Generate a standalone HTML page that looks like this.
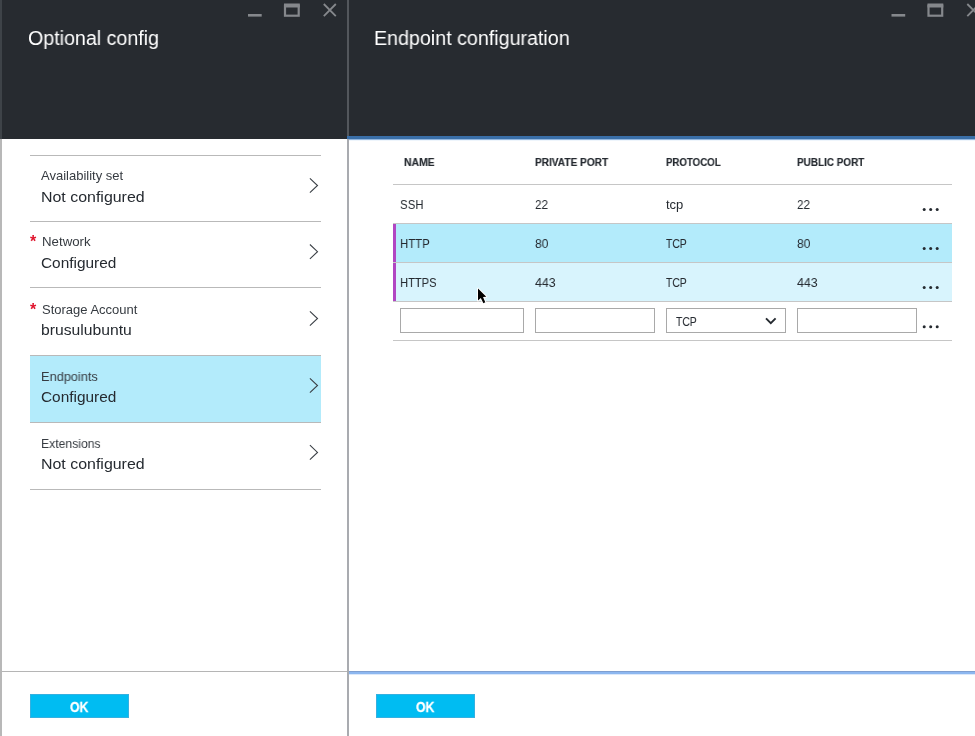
<!DOCTYPE html>
<html><head><meta charset="utf-8">
<style>
*{box-sizing:border-box;margin:0;padding:0}
html,body{width:975px;height:736px;overflow:hidden;background:#fff;font-family:"Liberation Sans",sans-serif;color:#252a30}
.abs{position:absolute}
.t{position:absolute;white-space:nowrap;line-height:1;transform-origin:0 0;will-change:transform}
.hdr{background:#272b30}
.title{font-size:20px;color:#fff}
.lbl{font-size:13px;color:#363b41}
.val{font-size:15px;color:#252a30}
.hl{background:#b3ebfb}
.line{position:absolute;height:1px;background:#b9b9b9}
.th{font-size:11px;font-weight:bold;color:#252a30;-webkit-text-stroke:0.15px #252a30}
.td{font-size:13px;color:#252a30}
.inp{position:absolute;border:1px solid #a9a9a9;background:#fff;height:25px}
.ok{position:absolute;background:#00bcf2;height:24.2px;width:98.7px;border:1px solid #35b0e0}
.okt{font-size:14px;font-weight:bold;color:#fff;-webkit-text-stroke:0.3px #fff}
.star{font-size:16px;font-weight:bold;color:#e0142d}
</style></head><body>
<!-- LEFT PANEL -->
<div class="abs hdr" style="left:0;top:0;width:348px;height:139px"></div>
<div class="abs" style="left:0;top:0;width:2px;height:139px;background:#3e4348"></div>
<div class="abs" style="left:0;top:139px;width:2px;height:597px;background:#b8b8b8"></div>
<div class="abs" style="left:347px;top:0;width:2px;height:139px;background:#53575c"></div>
<div class="abs" style="left:347px;top:139px;width:2px;height:597px;background:#a9abb0"></div>
<!-- RIGHT PANEL -->
<div class="abs hdr" style="left:349px;top:0;width:626px;height:136px"></div>
<div class="abs" style="left:347px;top:136px;width:628px;height:3px;background:#3a6fa8"></div>
<div class="abs" style="left:349px;top:139px;width:626px;height:1px;background:#94b7df"></div>
<div class="abs" style="left:349px;top:140px;width:626px;height:1px;background:#eef5fc"></div>

<div class="t title" id="t1" style="left:28px;top:28px;transform:scaleX(0.982)">Optional config</div>
<div class="t title" id="t2" style="left:374px;top:28px;transform:scaleX(0.983)">Endpoint configuration</div>

<!-- window icons -->
<svg class="abs" style="left:0;top:0" width="975" height="30" viewBox="0 0 975 30">
 <g fill="none" stroke="#85888c">
  <g id="wi">
   <rect x="248" y="14" width="13.7" height="2.6" fill="#85888c" stroke="none"/>
   <rect x="285" y="5.7" width="13.7" height="10" stroke-width="2.2"/>
   <rect x="284" y="3.5" width="15.8" height="4" fill="#85888c" stroke="none"/>
   <path d="M323.8 4 L335.8 16.2 M335.8 4 L323.8 16.2" stroke-width="1.8"/>
  </g>
  <use href="#wi" x="643.5"/>
 </g>
</svg>

<!-- left list -->
<div class="abs hl" style="left:30px;top:356px;width:291px;height:66px"></div>
<div class="line" style="left:30px;width:291px;top:155px"></div>
<div class="line" style="left:30px;width:291px;top:221px"></div>
<div class="line" style="left:30px;width:291px;top:287px"></div>
<div class="line" style="left:30px;width:291px;top:355px"></div>
<div class="line" style="left:30px;width:291px;top:422px"></div>
<div class="line" style="left:30px;width:291px;top:489px"></div>

<div class="t lbl" id="l1" style="left:41px;top:169px">Availability set</div>
<div class="t val" id="v1" style="left:41px;top:189px;transform:scaleX(1.0625)">Not configured</div>
<div class="t star" id="s1" style="left:30px;top:233.7px">*</div>
<div class="t lbl" id="l2" style="left:42px;top:235px;transform:scaleX(1.02)">Network</div>
<div class="t val" id="v2" style="left:41px;top:255px;transform:scaleX(1.027)">Configured</div>
<div class="t star" id="s2" style="left:30px;top:301.8px">*</div>
<div class="t lbl" id="l3" style="left:42px;top:302.8px">Storage Account</div>
<div class="t val" id="v3" style="left:41px;top:321.6px;transform:scaleX(1.047)">brusulubuntu</div>
<div class="t lbl" id="l4" style="left:41px;top:370px;transform:scaleX(0.983)">Endpoints</div>
<div class="t val" id="v4" style="left:41px;top:389px;transform:scaleX(1.027)">Configured</div>
<div class="t lbl" id="l5" style="left:41px;top:437px;transform:scaleX(0.9375)">Extensions</div>
<div class="t val" id="v5" style="left:41px;top:456px;transform:scaleX(1.0625)">Not configured</div>

<svg class="abs" style="left:300px;top:150px" width="30" height="330" viewBox="0 0 30 330">
 <g fill="none" stroke="#3b4046" stroke-width="1.1">
  <path id="chv" d="M9.9 28.3 L17.5 35.5 L9.9 42.7"/>
  <use href="#chv" y="66.2"/>
  <use href="#chv" y="133"/>
  <use href="#chv" y="200"/>
  <use href="#chv" y="266.9"/>
 </g>
</svg>

<!-- left footer -->
<div class="line" style="left:2px;width:345px;top:671px;background:#b5b5b5"></div>
<div class="ok" style="left:30.2px;top:694px"></div>
<div class="t okt" id="ok1" style="left:69.5px;top:700.3px;transform:scaleX(0.87)">OK</div>

<!-- right footer -->
<div class="abs" style="left:349px;top:671px;width:626px;height:1px;background:#7f9fd0"></div>
<div class="abs" style="left:349px;top:672px;width:626px;height:2px;background:#8db7f0"></div>
<div class="abs" style="left:349px;top:674px;width:626px;height:1px;background:#dbe8fa"></div>
<div class="ok" style="left:376.2px;top:694px"></div>
<div class="t okt" id="ok2" style="left:415.5px;top:700.3px;transform:scaleX(0.87)">OK</div>

<!-- table -->
<div class="abs" style="left:393px;top:224px;width:559px;height:38px;background:#b3ebfb"></div>
<div class="abs" style="left:393px;top:263px;width:559px;height:38px;background:#d8f4fd"></div>
<div class="abs" style="left:393px;top:224px;width:3px;height:77px;background:#b146c2"></div>
<div class="line" style="left:393px;width:559px;top:184px;background:#c6c6c6"></div>
<div class="line" style="left:393px;width:559px;top:223px;background:#c6c6c6"></div>
<div class="line" style="left:393px;width:559px;top:262px;background:#c6c6c6"></div>
<div class="line" style="left:393px;width:559px;top:301px;background:#c6c6c6"></div>
<div class="line" style="left:393px;width:559px;top:340px;background:#c6c6c6"></div>

<div class="t th" id="h1" style="left:404px;top:157px;transform:scaleX(0.945)">NAME</div>
<div class="t th" id="h2" style="left:535px;top:157px;transform:scaleX(0.918)">PRIVATE PORT</div>
<div class="t th" id="h3" style="left:666px;top:157px;transform:scaleX(0.88)">PROTOCOL</div>
<div class="t th" id="h4" style="left:797px;top:157px;transform:scaleX(0.903)">PUBLIC PORT</div>

<div class="t td" id="r1a" style="left:400px;top:198px;transform:scaleX(0.885)">SSH</div>
<div class="t td" id="r1b" style="left:535px;top:198px;transform:scaleX(0.9)">22</div>
<div class="t td" id="r1c" style="left:666px;top:198px">tcp</div>
<div class="t td" id="r1d" style="left:797px;top:198px;transform:scaleX(0.9)">22</div>
<div class="t td" id="r2a" style="left:400px;top:236.6px;transform:scaleX(0.876)">HTTP</div>
<div class="t td" id="r2b" style="left:535px;top:236.6px;transform:scaleX(0.93)">80</div>
<div class="t td" id="r2c" style="left:666px;top:236.6px;transform:scaleX(0.8)">TCP</div>
<div class="t td" id="r2d" style="left:797px;top:236.6px;transform:scaleX(0.93)">80</div>
<div class="t td" id="r3a" style="left:400px;top:275.5px;transform:scaleX(0.858)">HTTPS</div>
<div class="t td" id="r3b" style="left:535px;top:275.5px;transform:scaleX(0.95)">443</div>
<div class="t td" id="r3c" style="left:666px;top:275.5px;transform:scaleX(0.8)">TCP</div>
<div class="t td" id="r3d" style="left:797px;top:275.5px;transform:scaleX(0.95)">443</div>

<div class="inp" style="left:400px;top:308px;width:124px"></div>
<div class="inp" style="left:535px;top:308px;width:120px"></div>
<div class="inp" style="left:666px;top:308px;width:120px"></div>
<div class="inp" style="left:797px;top:308px;width:120px"></div>
<div class="t td" id="sel" style="left:676px;top:314.5px;transform:scaleX(0.8)">TCP</div>
<svg class="abs" style="left:760px;top:312px" width="20" height="16" viewBox="0 0 20 16"><path d="M6 6.3 L10.8 11.2 L15.6 6.3" fill="none" stroke="#252a30" stroke-width="1.9"/></svg>

<!-- dots -->
<svg class="abs" style="left:915px;top:190px" width="30" height="150" viewBox="0 0 30 150">
 <g fill="#252a30">
  <g id="dots"><circle cx="9.2" cy="19.5" r="1.5"/><circle cx="15.7" cy="19.5" r="1.5"/><circle cx="22.2" cy="19.5" r="1.5"/></g>
  <use href="#dots" y="39"/><use href="#dots" y="78"/><use href="#dots" y="117.3"/>
 </g>
</svg>

<!-- cursor -->
<svg class="abs" style="left:470px;top:282px" width="24" height="28" viewBox="0 0 24 28">
 <path d="M8 6.6 L8 18.5 L10.8 16.1 L13.4 21.2 L15.3 20.3 L13 15 L16.3 14.8 Z" fill="#000" stroke="#fff" stroke-width="2" stroke-linejoin="round" paint-order="stroke fill"/>
</svg>
</body></html>
